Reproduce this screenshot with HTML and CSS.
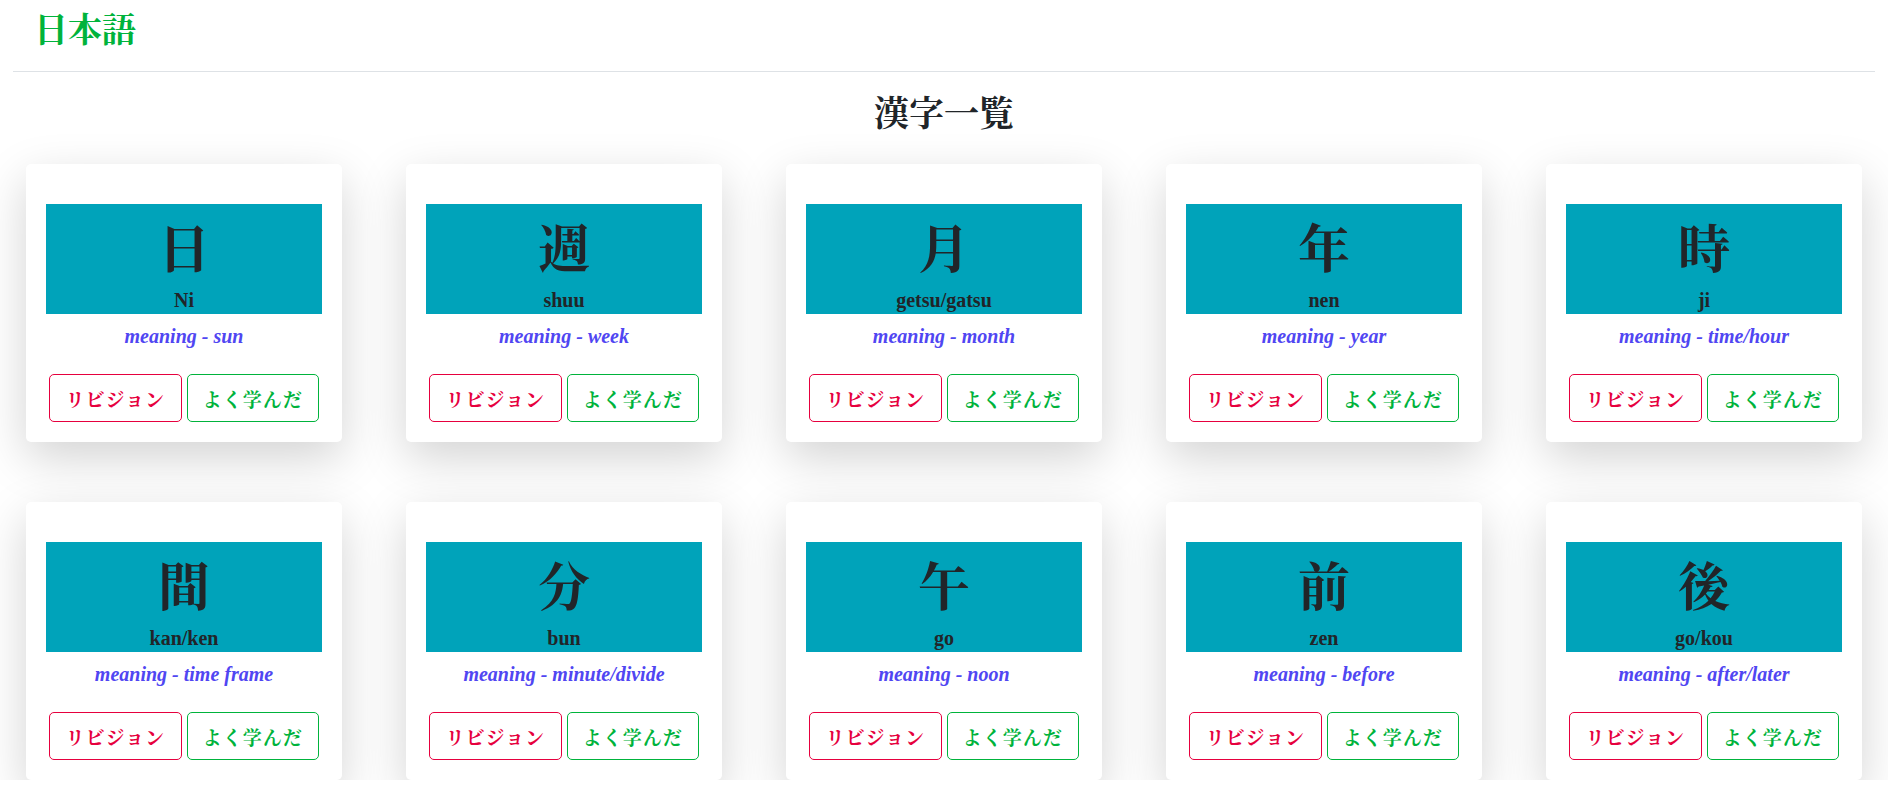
FILE: index.html
```html
<!DOCTYPE html>
<html lang="ja">
<head>
<meta charset="utf-8">
<title>日本語</title>
<link rel="stylesheet" href="styles.css">
</head>
<body>
<header class="nav">
  <a class="brand" href="#">日本語</a>
</header>
<h1 class="title">漢字一覧</h1>
<main class="grid">
  <div class="card"><div class="kanji-box"><div class="kanji">日</div><div class="reading">Ni</div></div><p class="meaning">meaning - sun</p><div class="actions"><button class="btn btn-red">リビジョン</button><button class="btn btn-green">よく学んだ</button></div></div>
  <div class="card"><div class="kanji-box"><div class="kanji">週</div><div class="reading">shuu</div></div><p class="meaning">meaning - week</p><div class="actions"><button class="btn btn-red">リビジョン</button><button class="btn btn-green">よく学んだ</button></div></div>
  <div class="card"><div class="kanji-box"><div class="kanji">月</div><div class="reading">getsu/gatsu</div></div><p class="meaning">meaning - month</p><div class="actions"><button class="btn btn-red">リビジョン</button><button class="btn btn-green">よく学んだ</button></div></div>
  <div class="card"><div class="kanji-box"><div class="kanji">年</div><div class="reading">nen</div></div><p class="meaning">meaning - year</p><div class="actions"><button class="btn btn-red">リビジョン</button><button class="btn btn-green">よく学んだ</button></div></div>
  <div class="card"><div class="kanji-box"><div class="kanji">時</div><div class="reading">ji</div></div><p class="meaning">meaning - time/hour</p><div class="actions"><button class="btn btn-red">リビジョン</button><button class="btn btn-green">よく学んだ</button></div></div>
  <div class="card"><div class="kanji-box"><div class="kanji">間</div><div class="reading">kan/ken</div></div><p class="meaning">meaning - time frame</p><div class="actions"><button class="btn btn-red">リビジョン</button><button class="btn btn-green">よく学んだ</button></div></div>
  <div class="card"><div class="kanji-box"><div class="kanji">分</div><div class="reading">bun</div></div><p class="meaning">meaning - minute/divide</p><div class="actions"><button class="btn btn-red">リビジョン</button><button class="btn btn-green">よく学んだ</button></div></div>
  <div class="card"><div class="kanji-box"><div class="kanji">午</div><div class="reading">go</div></div><p class="meaning">meaning - noon</p><div class="actions"><button class="btn btn-red">リビジョン</button><button class="btn btn-green">よく学んだ</button></div></div>
  <div class="card"><div class="kanji-box"><div class="kanji">前</div><div class="reading">zen</div></div><p class="meaning">meaning - before</p><div class="actions"><button class="btn btn-red">リビジョン</button><button class="btn btn-green">よく学んだ</button></div></div>
  <div class="card"><div class="kanji-box"><div class="kanji">後</div><div class="reading">go/kou</div></div><p class="meaning">meaning - after/later</p><div class="actions"><button class="btn btn-red">リビジョン</button><button class="btn btn-green">よく学んだ</button></div></div>
</main>
</body>
</html>
```
FILE: styles.css
```css
* { box-sizing: border-box; }
html, body { margin: 0; padding: 0; }
body {
  background: #fff;
  color: #212529;
  font-family: "Liberation Serif", "Noto Serif CJK JP", "Noto Sans CJK JP", serif;
  font-weight: 700;
  overflow: hidden;
}
.nav {
  margin: 0 13px;
  height: 72px;
  border-bottom: 1px solid #dee2e6;
  display: flex;
  align-items: center;
  padding-left: 21px;
}
.brand {
  color: #00b33c;
  text-decoration: none;
  font-size: 34px;
  line-height: 1.2;
  margin-top: -8px;
}
.title {
  text-align: center;
  font-size: 35px;
  line-height: 42px;
  margin: 22px 0 28px;
  font-weight: 700;
}
.grid {
  display: grid;
  grid-template-columns: repeat(5, 316px);
  column-gap: 64px;
  row-gap: 60px;
  padding: 0 26px;
}
.card {
  background: #fff;
  border-radius: 5px;
  box-shadow: 0 16px 48px rgba(0, 0, 0, 0.175);
  padding: 40px 20px 20px;
  height: 278px;
}
.kanji-box {
  background: #00a3ba;
  height: 110px;
  padding-top: 8px;
  text-align: center;
}
.kanji {
  font-size: 52px;
  line-height: 78px;
}
.reading {
  font-size: 20px;
  line-height: 20px;
}
.meaning {
  margin: 10px 0 0;
  text-align: center;
  font-style: italic;
  color: #5046f2;
  font-size: 20px;
  line-height: 24px;
}
.actions {
  display: flex;
  gap: 5px;
  margin-top: 26px;
  padding: 0 3px;
}
.btn {
  flex: 1;
  height: 48px;
  background: #fff;
  border-radius: 5px;
  font-family: inherit;
  font-weight: 700;
  font-size: 19px;
  letter-spacing: 1px;
  cursor: pointer;
}
.btn-red { border: 1px solid #e6003e; color: #e6003e; }
.btn-green { border: 1px solid #00b33c; color: #00b33c; }
```
